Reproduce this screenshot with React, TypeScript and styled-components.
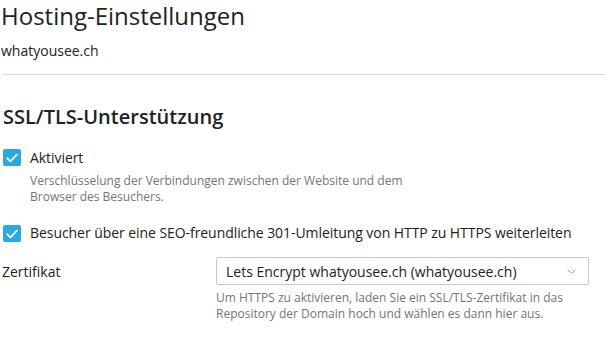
import React from "react";
import styled, { createGlobalStyle } from "styled-components";

const Global = createGlobalStyle`
  html, body { margin: 0; padding: 0; background: #fff; }
  body { font-family: "Open Sans", "Noto Sans", sans-serif; color: #222; }
  * { box-sizing: border-box; }
`;

const Page = styled.div`
  width: 605px;
  height: 350px;
  overflow: hidden;
  padding: 0 0 0 1px;
`;

const Title = styled.h1`
  margin: 0;
  font-size: 24px;
  font-weight: 400;
  line-height: 32px;
  color: #222;
`;

const Subtitle = styled.div`
  margin-top: 9px;
  font-size: 14px;
  line-height: 20px;
  color: #222;
`;

const Divider = styled.hr`
  margin: 13px 0 0 1px;
  border: 0;
  border-top: 1px solid #d8d8e0;
`;

const SectionTitle = styled.h2`
  margin: 28px 0 0 2px;
  font-size: 20px;
  font-weight: 600;
  line-height: 28px;
  color: #222;
`;

const CheckRow = styled.label<{ $mt: number }>`
  display: flex;
  align-items: flex-start;
  gap: 9px;
  margin-top: ${(p) => p.$mt}px;
`;

const Box = styled.span<{ $mt: number }>`
  flex: none;
  width: 18px;
  height: 17px;
  border-radius: 2px;
  background: #28a9e0;
  display: flex;
  align-items: center;
  justify-content: center;
  margin-left: 2px;
  margin-top: ${(p) => p.$mt}px;
`;

const CheckText = styled.div`
  display: flex;
  flex-direction: column;
`;

const CheckLabel = styled.span`
  font-size: 14px;
  line-height: 20px;
  letter-spacing: -0.06px;
  color: #222;
`;

const Hint = styled.div<{ $width?: number }>`
  font-size: 12px;
  line-height: 16px;
  color: #757575;
  margin-top: 5px;
  ${(p) => (p.$width ? `max-width: ${p.$width}px;` : "")}
`;

const FieldRow = styled.div`
  display: grid;
  grid-template-columns: 215px 373px;
  margin-top: 14px;
`;

const FieldLabel = styled.div`
  font-size: 14px;
  line-height: 20px;
  padding-top: 5px;
  padding-left: 1px;
  color: #222;
`;

const Select = styled.div`
  height: 28px;
  border: 1px solid #c8c8c8;
  border-radius: 2px;
  display: flex;
  align-items: center;
  justify-content: space-between;
  padding: 0 12px 0 9px;
  font-size: 14px;
  color: #222;
`;

const SelectHint = styled(Hint)`
  margin-top: 5px;
`;

const Check = ({ mt }: { mt: number }) => (
  <Box $mt={mt}>
    <svg width="12" height="10" viewBox="0 0 12 10">
      <path d="M1.2 5.2 L4.4 8.3 L10.8 1.6" fill="none" stroke="#fff" strokeWidth="1.8" strokeLinecap="round" strokeLinejoin="round" />
    </svg>
  </Box>
);

export default function App() {
  return (
    <Page>
      <Global />
      <Title>Hosting-Einstellungen</Title>
      <Subtitle>whatyousee.ch</Subtitle>
      <Divider />
      <SectionTitle>SSL/TLS-Unterstützung</SectionTitle>
      <CheckRow $mt={17}>
        <Check mt={1} />
        <CheckText>
          <CheckLabel>Aktiviert</CheckLabel>
          <Hint $width={385}>
            Verschlüsselung der Verbindungen zwischen der Website und dem Browser des Besuchers.
          </Hint>
        </CheckText>
      </CheckRow>
      <CheckRow $mt={18}>
        <Check mt={2} />
        <CheckLabel>Besucher über eine SEO-freundliche 301-Umleitung von HTTP zu HTTPS weiterleiten</CheckLabel>
      </CheckRow>
      <FieldRow>
        <FieldLabel>Zertifikat</FieldLabel>
        <div>
          <Select>
            <span>Lets Encrypt whatyousee.ch (whatyousee.ch)</span>
            <svg width="9" height="5" viewBox="0 0 9 5">
              <path d="M0.5 0.5 L4.5 4.5 L8.5 0.5" fill="none" stroke="#aaa" strokeWidth="1" />
            </svg>
          </Select>
          <SelectHint $width={365}>
            Um HTTPS zu aktivieren, laden Sie ein SSL/TLS-Zertifikat in das Repository der Domain hoch und wählen es dann hier aus.
          </SelectHint>
        </div>
      </FieldRow>
    </Page>
  );
}
